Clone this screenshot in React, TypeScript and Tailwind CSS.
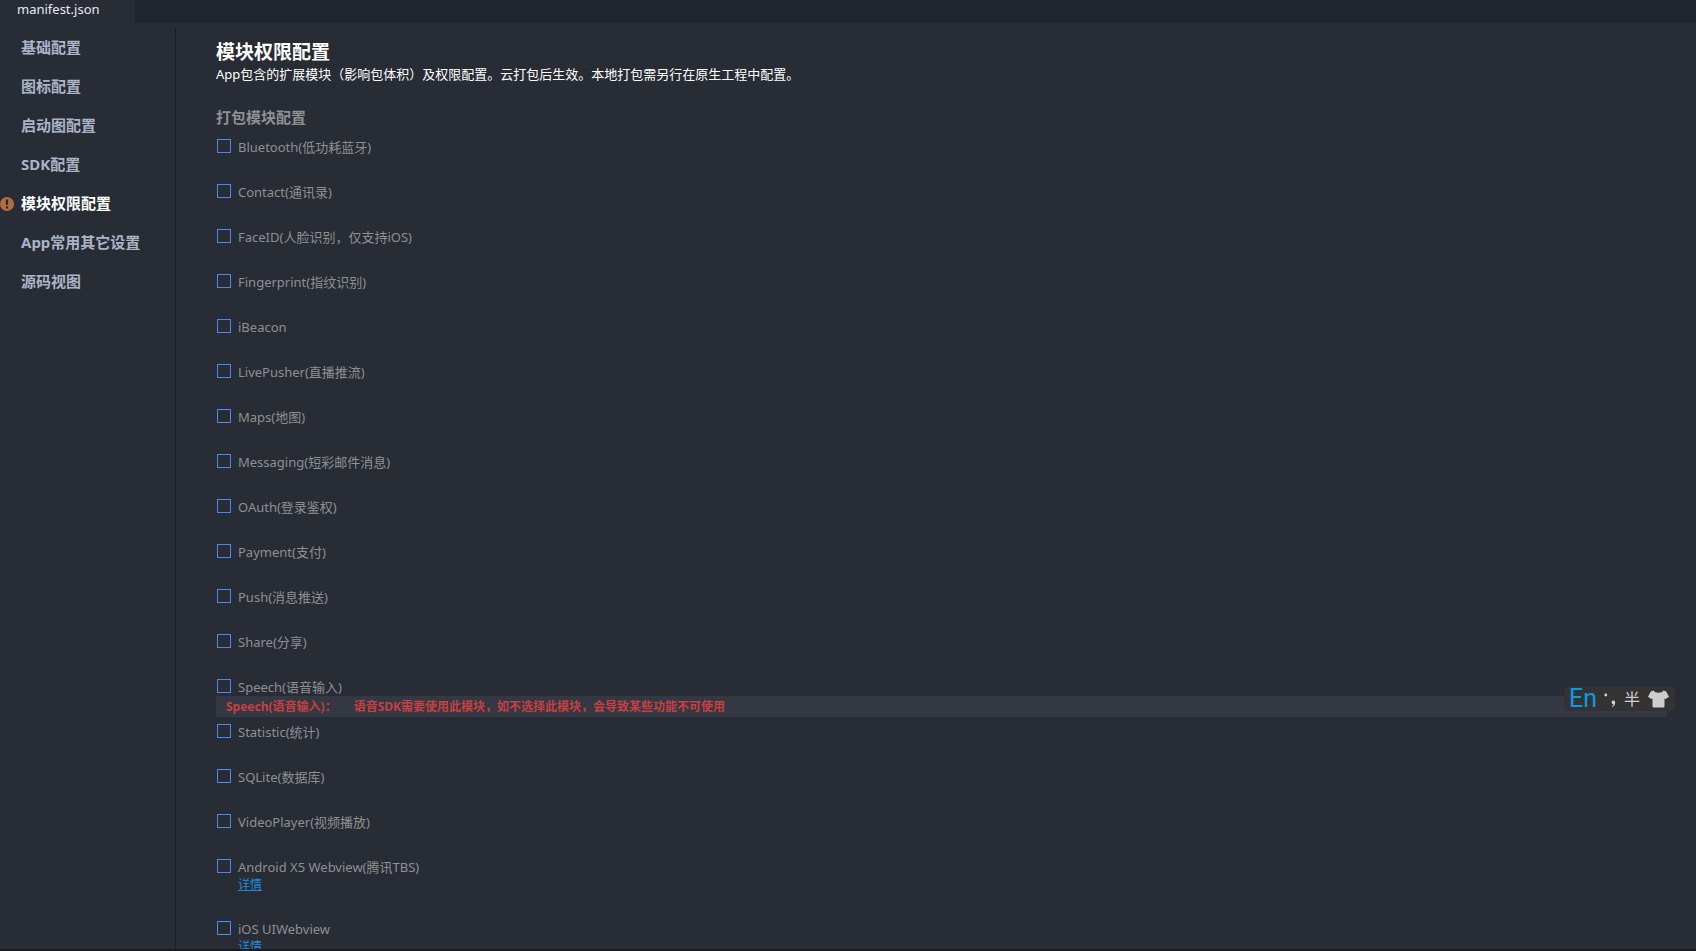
import { useState } from "react";
import clsx from "clsx";

interface ModuleItem {
  id: string;
  label: string;
  link?: boolean;
  warning?: string;
}

const navItems = [
  { id: "basic", label: "基础配置" },
  { id: "icon", label: "图标配置" },
  { id: "splash", label: "启动图配置" },
  { id: "sdk", label: "SDK配置" },
  { id: "modules", label: "模块权限配置", alert: true },
  { id: "other", label: "App常用其它设置" },
  { id: "source", label: "源码视图" },
];

const modules: ModuleItem[] = [
  { id: "bluetooth", label: "Bluetooth(低功耗蓝牙)" },
  { id: "contact", label: "Contact(通讯录)" },
  { id: "faceid", label: "FaceID(人脸识别，仅支持iOS)" },
  { id: "fingerprint", label: "Fingerprint(指纹识别)" },
  { id: "ibeacon", label: "iBeacon" },
  { id: "livepusher", label: "LivePusher(直播推流)" },
  { id: "maps", label: "Maps(地图)" },
  { id: "messaging", label: "Messaging(短彩邮件消息)" },
  { id: "oauth", label: "OAuth(登录鉴权)" },
  { id: "payment", label: "Payment(支付)" },
  { id: "push", label: "Push(消息推送)" },
  { id: "share", label: "Share(分享)" },
  {
    id: "speech",
    label: "Speech(语音输入)",
    warning: "语音SDK需要使用此模块，如不选择此模块，会导致某些功能不可使用",
  },
  { id: "statistic", label: "Statistic(统计)" },
  { id: "sqlite", label: "SQLite(数据库)" },
  { id: "videoplayer", label: "VideoPlayer(视频播放)" },
  { id: "x5", label: "Android X5 Webview(腾讯TBS)", link: true },
  { id: "uiwebview", label: "iOS UIWebview", link: true },
];

const AlertIcon = () => (
  <svg viewBox="0 0 14 14" className="w-3.5 h-3.5">
    <circle cx="7" cy="7" r="7" fill="#b06c42" />
    <path d="M5.7 2.5h2.6l-.3 5.5H6zM5.9 9.2h2.2v2.2H5.9z" fill="#282c35" />
  </svg>
);

const ShirtIcon = () => (
  <svg viewBox="0 0 21 18" className="w-[21px] h-[18px]">
    <path
      d="M5.5 0.5C7 3.4 14 3.4 15.5 0.5L18.2 1.6L21 6.8L17.7 9L16.5 8.4V16.5Q16.5 17.5 15.5 17.5H5.5Q4.5 17.5 4.5 16.5V8.4L3.3 9L0 6.8L2.8 1.6Z"
      fill="#cdcdcd"
    />
  </svg>
);

const InputMethodBar = () => (
  <div className="absolute right-[21px] top-[687px] flex h-6 w-[111px] items-center rounded bg-[#333333] pl-[5px] text-[#d0d0d0]">
    <span className="w-[35px] font-['Roboto',sans-serif] text-[25px] leading-6 text-[#0a9be6]">En</span>
    <svg viewBox="0 0 12 16" className="w-3 h-4">
      <circle cx="1.8" cy="4" r="1.4" fill="#d0d0d0" />
      <path d="M7.6 11.2a1.8 1.8 0 1 1 3.5.6c0 2-1 3.4-2.6 4.2l-.5-.8c1-.6 1.4-1.2 1.4-2-1 0-1.8-.8-1.8-2z" fill="#d0d0d0" />
    </svg>
    <span className="mx-2 text-base leading-6">半</span>
    <ShirtIcon />
  </div>
);

const ModuleRow = ({ item, checked, onToggle }: { item: ModuleItem; checked: boolean; onToggle: () => void }) => (
  <li className={item.warning ? "pb-[5px]" : "pb-[26px]"}>
    <div className="flex h-[19px] items-start gap-[7px] pl-px">
      <input
        id={item.id}
        type="checkbox"
        checked={checked}
        onChange={onToggle}
        className="mt-0.5 h-3.5 w-3.5 appearance-none border border-[#4d88f5] checked:bg-[#4d88f5]"
      />
      <label htmlFor={item.id} className="text-[13px] leading-[21px]">
        {item.label}
      </label>
    </div>
    {item.warning && (
      <p className="flex gap-[17px] bg-[#333842] pl-2.5 text-xs leading-[21px] font-bold text-[#c83f41]">
        <span>{item.label}：</span>
        <span>{item.warning}</span>
      </p>
    )}
    {item.link && (
      <p className="pl-[22px] text-xs leading-[17px]">
        <a href="#" className="text-[#2488d8] underline">
          详情
        </a>
      </p>
    )}
  </li>
);

const App = () => {
  const [active, setActive] = useState("modules");
  const [selected, setSelected] = useState<string[]>([]);

  const toggle = (id: string) =>
    setSelected((prev) => (prev.includes(id) ? prev.filter((s) => s !== id) : [...prev, id]));

  return (
    <div className="relative flex h-screen flex-col overflow-hidden border-b-2 border-[#1a1c22] bg-[#282c35] font-['Noto_Sans','Noto_Sans_CJK_SC',sans-serif] text-[#8f9091]">
      <header className="flex h-[23px] shrink-0 bg-[#21252d]">
        <button className="w-[135px] bg-[#282c35] pb-1 pl-[17px] text-left text-[13px] leading-[19px] text-[#e6e8ea]">
          manifest.json
        </button>
      </header>

      <div className="flex min-h-0 flex-1 pt-[5px]">
        <nav className="w-44 shrink-0 border-r border-[#1a1d24]">
          {navItems.map((item) => (
            <button
              key={item.id}
              onClick={() => setActive(item.id)}
              className={clsx(
                "flex h-[39px] w-full items-center gap-[7px] text-[15px] font-bold",
                active === item.id ? "text-white" : "text-[#abb4c6]"
              )}
            >
              <span className="w-3.5">{item.alert && <AlertIcon />}</span>
              {item.label}
            </button>
          ))}
        </nav>

        <main className="min-w-0 flex-1 overflow-hidden pt-3 pr-[29px] pl-10">
          <h1 className="text-[19px] leading-6 font-bold text-white">模块权限配置</h1>
          <p className="text-[13px] leading-5 text-white">
            App包含的扩展模块（影响包体积）及权限配置。云打包后生效。本地打包需另行在原生工程中配置。
          </p>
          <h2 className="mt-[21px] mb-[7px] text-[15px] leading-[25px] font-bold">打包模块配置</h2>
          <ul>
            {modules.map((item) => (
              <ModuleRow
                key={item.id}
                item={item}
                checked={selected.includes(item.id)}
                onToggle={() => toggle(item.id)}
              />
            ))}
          </ul>
        </main>
      </div>

      <InputMethodBar />
    </div>
  );
};

export default App;
